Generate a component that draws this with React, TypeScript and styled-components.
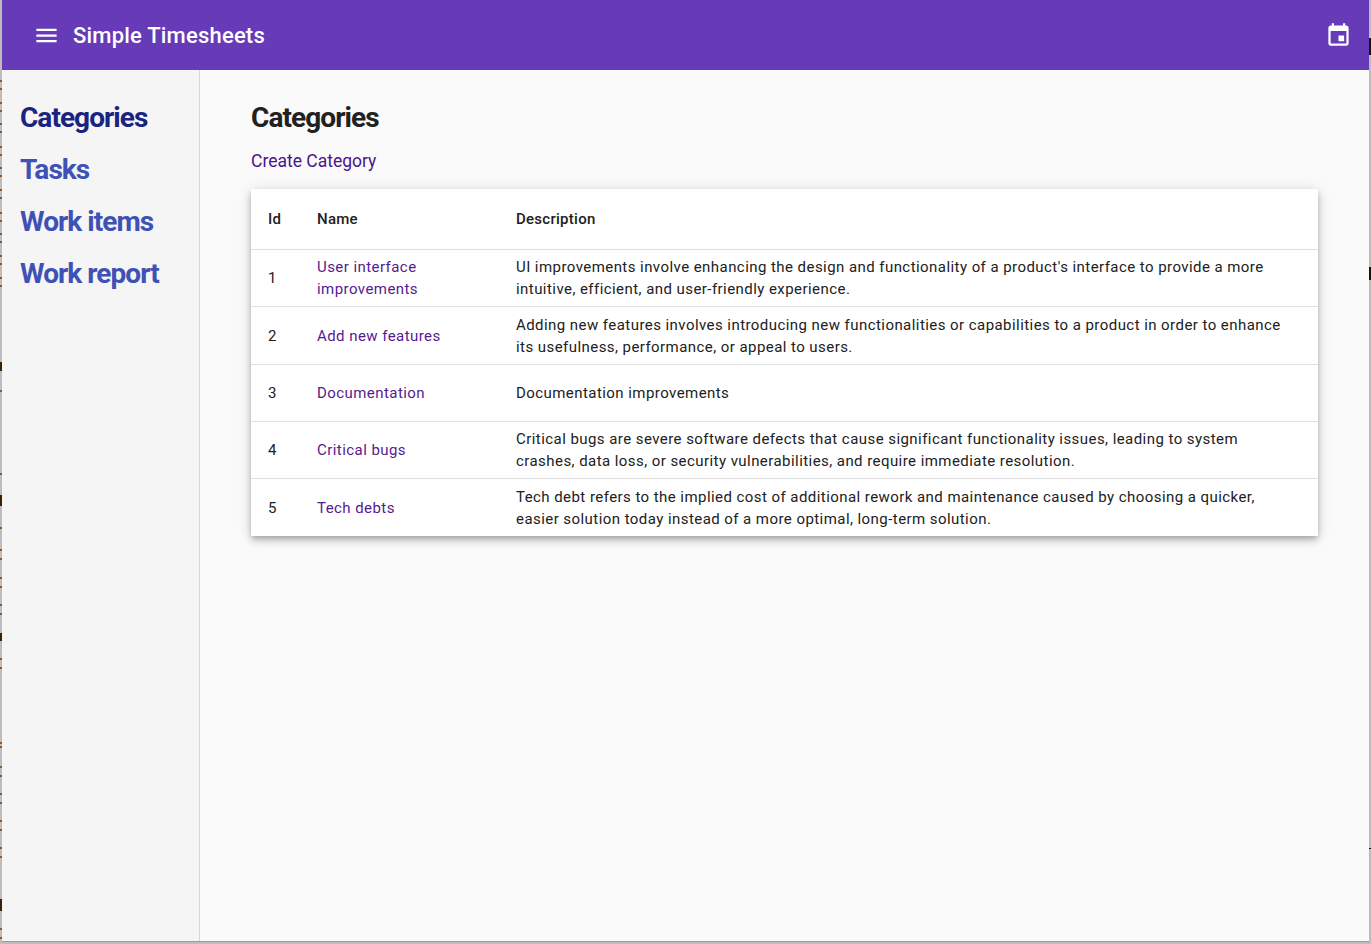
import React from "react";
import styled, { createGlobalStyle } from "styled-components";

const Global = createGlobalStyle`
  html, body { margin: 0; padding: 0; height: 100%; }
  body { background: #bdbdbd; font-family: Roboto, "Liberation Sans", sans-serif; color: #212121; overflow: hidden; }
`;
const Frame = styled.div`
  position: relative; width: 1367px; height: 941px; margin-left: 2px; display: flex; flex-direction: column; background: #fafafa;
  box-shadow: 0 1px 0 #9c9c9c;
`;
const EdgeMarks = styled.svg`
  position: absolute; top: 0; left: 0; width: 1371px; height: 944px; pointer-events: none;
`;
const Toolbar = styled.header`
  height: 70px; flex: none; background: #673ab7; color: #fff; display: flex; align-items: center; padding: 0 17px 0 30.6px;
`;
const IconSlot = styled.span`
  width: 27px; height: 27px; display: block; flex: none;
  svg { display: block; fill: #fff; }
`;
const Title = styled.h1`
  margin: 2px 0 0 13.4px; font-size: 22px; font-weight: 500; line-height: 32px; flex: 1; letter-spacing: 0.2px;
`;
const Body = styled.div`
  flex: 1; display: flex; min-height: 0;
`;
const Side = styled.nav`
  width: 179px; flex: none; background: #f5f5f5; border-right: 1px solid #d6d6d6; padding: 22px 0 0 18px;
  display: flex; flex-direction: column;
`;
const NavLink = styled.a<{ $active?: boolean }>`
  font-size: 28px; font-weight: 700; line-height: 52px; letter-spacing: -0.95px; text-decoration: none;
  color: ${(p) => (p.$active ? "#1a237e" : "#3f51b5")};
`;
const Main = styled.main`
  flex: 1; padding: 22px 51px 0; min-width: 0;
`;
const Heading = styled.h2`
  margin: 0; font-size: 28px; font-weight: 700; line-height: 52px; letter-spacing: -0.92px; color: #212121;
`;
const CreateLink = styled.a`
  display: block; margin-top: 5px; font-size: 17.5px; line-height: 24px; color: #4a148c; text-decoration: none;
`;
const Table = styled.table`
  margin-top: 16px; width: 1067px; border-collapse: collapse; table-layout: fixed; background: #fff;
  box-shadow: 0 3px 5px -1px rgba(0,0,0,.2), 0 5px 8px rgba(0,0,0,.14), 0 1px 14px rgba(0,0,0,.12);
`;
const HeadCell = styled.th`
  height: 60px; padding: 0 0 0 17px; text-align: left; font-size: 15px; font-weight: 500; letter-spacing: 0.27px; color: #212121; box-sizing: border-box;
`;
const Cell = styled.td`
  padding: 6px 20px 6px 17px; font-size: 15px; line-height: 22px; letter-spacing: 0.44px; color: #212121; vertical-align: middle;
`;
const Row = styled.tr`
  height: 57px; border-top: 1px solid #e0e0e0;
  &:nth-child(3n + 2) { height: 58px; }
  &:nth-child(3n + 2) ${Cell} { padding-top: 7px; padding-bottom: 5px; }
`;
const NameLink = styled.a`
  color: #561a90; text-decoration: none;
`;

const rows = [
  ["1", "User interface improvements", "UI improvements involve enhancing the design and functionality of a product's interface to provide a more intuitive, efficient, and user-friendly experience."],
  ["2", "Add new features", "Adding new features involves introducing new functionalities or capabilities to a product in order to enhance its usefulness, performance, or appeal to users."],
  ["3", "Documentation", "Documentation improvements"],
  ["4", "Critical bugs", "Critical bugs are severe software defects that cause significant functionality issues, leading to system crashes, data loss, or security vulnerabilities, and require immediate resolution."],
  ["5", "Tech debts", "Tech debt refers to the implied cost of additional rework and maintenance caused by choosing a quicker, easier solution today instead of a more optimal, long-term solution."],
];

const leftTicks = [80, 88, 102, 110, 123, 131, 146, 154, 167, 175, 189, 197, 212, 220, 233, 241, 255, 263, 277, 285, 390, 473, 527, 549, 558, 577, 586, 604, 613, 658, 667, 742, 746, 766, 775, 793, 802, 820, 829, 847, 856, 928, 937];
const leftBlocks: [number, number][] = [[362, 9], [495, 11], [633, 8], [899, 12]];
const rightBlocks: [number, number][] = [[38, 17], [267, 13], [848, 1]];

export default function App() {
  return (
    <>
      <Global />
      <EdgeMarks viewBox="0 0 1371 944">
        {leftTicks.map((y) => <rect key={y} x="0" y={y} width="2" height="2" fill="#8a5a22" />)}
        {leftBlocks.map(([y, h]) => <rect key={y} x="0" y={y} width="2" height={h} fill="#3a2208" />)}
        {rightBlocks.map(([y, h]) => <rect key={y} x="1369" y={y} width="2" height={h} fill="#1a1208" />)}
      </EdgeMarks>
      <Frame>
        <Toolbar>
          <IconSlot>
            <svg width="27" height="27" viewBox="0 0 24 24"><path d="M3 18h18v-2H3v2zm0-5h18v-2H3v2zm0-7v2h18V6H3z" /></svg>
          </IconSlot>
          <Title>Simple Timesheets</Title>
          <IconSlot>
            <svg width="27" height="27" viewBox="0 0 24 24"><path d="M17 12h-5v5h5v-5zM16 1v2H8V1H6v2H5c-1.11 0-1.99.9-1.99 2L3 19c0 1.1.89 2 2 2h14c1.1 0 2-.9 2-2V5c0-1.1-.9-2-2-2h-1V1h-2zm3 18H5V8h14v11z" /></svg>
          </IconSlot>
        </Toolbar>
        <Body>
          <Side>
            <NavLink $active>Categories</NavLink>
            <NavLink>Tasks</NavLink>
            <NavLink>Work items</NavLink>
            <NavLink>Work report</NavLink>
          </Side>
          <Main>
            <Heading>Categories</Heading>
            <CreateLink>Create Category</CreateLink>
            <Table>
              <colgroup>
                <col style={{ width: 49 }} />
                <col style={{ width: 199 }} />
                <col />
              </colgroup>
              <thead>
                <tr>
                  <HeadCell>Id</HeadCell>
                  <HeadCell>Name</HeadCell>
                  <HeadCell>Description</HeadCell>
                </tr>
              </thead>
              <tbody>
                {rows.map((r) => (
                  <Row key={r[0]}>
                    <Cell>{r[0]}</Cell>
                    <Cell><NameLink>{r[1]}</NameLink></Cell>
                    <Cell>{r[2]}</Cell>
                  </Row>
                ))}
              </tbody>
            </Table>
          </Main>
        </Body>
      </Frame>
    </>
  );
}
